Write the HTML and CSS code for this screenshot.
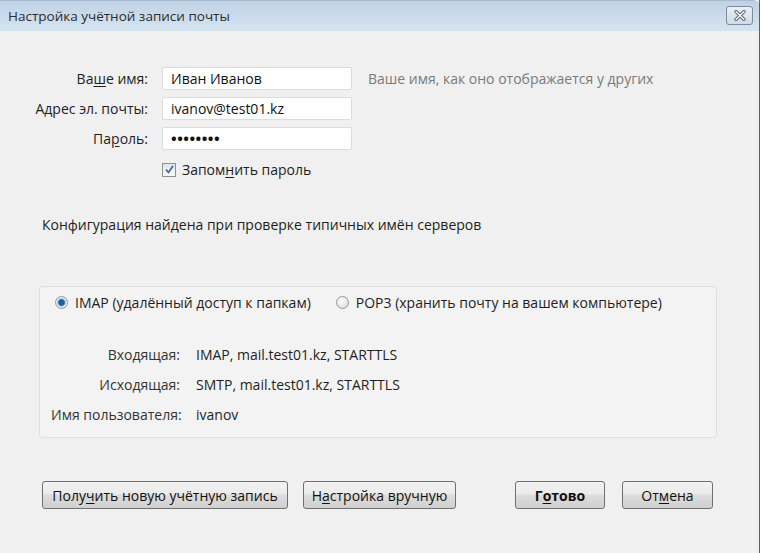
FILE: index.html
```html
<!DOCTYPE html>
<html lang="ru">
<head>
<meta charset="utf-8">
<link rel="stylesheet" href="styles.css">
</head>
<body>
<div class="window">
  <div class="titlebar">
    <span class="title">Настройка учётной записи почты</span>
    <span class="close"><svg width="14" height="11" viewBox="0 0 14 11"><path d="M3 1.5 L11 9.5 M11 1.5 L3 9.5" stroke="#5a6470" stroke-width="3.2" stroke-linecap="round"/><path d="M3 1.5 L11 9.5 M11 1.5 L3 9.5" stroke="#f4f6f8" stroke-width="1.4" stroke-linecap="round"/></svg></span>
  </div>
  <div class="content">
    <div class="form">
      <label class="lbl">Ва<u>ш</u>е имя:</label>
      <div class="field">Иван Иванов</div>
      <span class="hint">Ваше имя, как оно отображается у других</span>
      <label class="lbl">А<u>д</u>рес эл. почты:</label>
      <div class="field">ivanov@test01.kz</div>
      <span></span>
      <label class="lbl">Па<u>р</u>оль:</label>
      <div class="field dots">••••••••</div>
      <span></span>
      <span></span>
      <div class="check"><span class="box"><svg width="9" height="9" viewBox="0 0 9 9"><path d="M1 4.5 L3.5 7.5 L8 1" fill="none" stroke="#3a5f9c" stroke-width="1.6"/></svg></span><span>Запом<u>н</u>ить пароль</span></div>
    </div>
    <p class="found">Конфигурация найдена при проверке типичных имён серверов</p>
    <div class="group">
      <div class="radios">
        <span class="radio"><span class="dot on"></span><span>IMAP (удалённый доступ к папкам)</span></span>
        <span class="radio"><span class="dot"></span><span>POP3 (хранить почту на вашем компьютере)</span></span>
      </div>
      <div class="details">
        <span class="dl">Входящая:</span><span>IMAP, mail.test01.kz, STARTTLS</span>
        <span class="dl">Исходящая:</span><span>SMTP, mail.test01.kz, STARTTLS</span>
        <span class="dl">Имя пользователя:</span><span>ivanov</span>
      </div>
    </div>
    <div class="buttons">
      <button class="btn wide">Полу<u>ч</u>ить новую учётную запись</button>
      <button class="btn manual">Н<u>а</u>стройка вручную</button>
      <span class="spacer"></span>
      <button class="btn ok">Г<u>о</u>тово</button>
      <button class="btn cancel">От<u>м</u>ена</button>
    </div>
  </div>
</div>
</body>
</html>
```
FILE: styles.css
```css
* { box-sizing: border-box; }
html, body { margin: 0; padding: 0; }
body {
  width: 761px; height: 553px; overflow: hidden;
  font-family: "Open Sans", "Noto Sans", sans-serif;
  font-size: 14px; line-height: 19px; color: #1e1e1e; background: #fff;
}
.window {
  width: 760px; height: 553px;
  background: #f0f0f0;
  border-right: 1px solid #5e5e5e;
  display: flex; flex-direction: column;
}
.titlebar {
  height: 31px; flex: none;
  background: linear-gradient(#bfd2e5, #d6e4f1);
  border-top: 1px solid #a9bccf;
  display: flex; align-items: center; justify-content: space-between;
  padding: 0 6px 0 8px;
  border-top-right-radius: 6px;
}
.title { color: #2c2c2c; font-size: 13.5px; }
.close {
  width: 27px; height: 19px;
  border: 1px solid #7f8b98; border-radius: 3px;
  background: linear-gradient(#e9eff6, #cfdbe8);
  display: flex; align-items: center; justify-content: center;
  margin-top: -2px;
}
.content { flex: 1; padding: 36px 0 0 0; display: flex; flex-direction: column; }
.form {
  display: grid;
  grid-template-columns: 148px 190px auto;
  column-gap: 14px; row-gap: 7px;
  align-items: center;
}
.lbl { text-align: right; white-space: nowrap; }
.field {
  height: 23px; background: #fff;
  border: 1px solid #dcdcdc; border-radius: 2px;
  padding: 0 8px; display: flex; align-items: center;
  color: #111;
}
.dots { font-size: 15px; letter-spacing: 0.5px; font-weight: bold; }
.hint { color: #7a7a7a; padding-left: 2px; white-space: nowrap; }
.check { display: flex; align-items: center; gap: 6px; margin-top: 3px; }
.box {
  width: 14px; height: 14px; border: 1px solid #8e8f8f;
  background: linear-gradient(#dfe3ea, #fbfbfb);
  display: flex; align-items: center; justify-content: center;
}
.found { margin: 36px 0 0 42px; }
.group {
  margin: 52px 0 0 39px; width: 678px; height: 152px;
  border: 1px solid #dfdfdf; border-radius: 3px; background: #f3f3f3;
  padding: 6px 0 0 11px;
}
.radios { display: flex; gap: 25px; padding-left: 4px; }
.radio { display: flex; align-items: center; gap: 7px; white-space: nowrap; }
.dot {
  width: 13px; height: 13px; border-radius: 50%;
  border: 1px solid #979797;
  background: radial-gradient(circle at 40% 35%, #fafafa, #d9d9d9);
  display: inline-block;
}
.dot.on { background: radial-gradient(circle, #1c5fa0 0 2.5px, #5ba1d6 3.5px, #f1f1f1 4.5px, #d8d8d8 6px); }
.details {
  display: grid; grid-template-columns: 129px auto;
  column-gap: 16px; row-gap: 11px; margin-top: 33px;
}
.dl { text-align: right; color: #333; white-space: nowrap; }
.buttons {
  display: flex; margin: 43px 0 0 42px; width: 671px; gap: 15px;
}
.spacer { flex: 1; }
.btn {
  height: 28px; font: inherit; color: #111;
  border: 1px solid #707070; border-radius: 3px;
  background: linear-gradient(#f2f2f2 0%, #ebebeb 45%, #dddddd 50%, #cfcfcf 100%);
  padding: 0 6px; white-space: nowrap;
}
.wide { width: 246px; }
.manual { width: 153px; }
.ok { width: 90px; font-weight: bold; margin-right: 2px; }
.cancel { width: 91px; }
u { text-decoration: underline; text-underline-offset: 2px; }
```
